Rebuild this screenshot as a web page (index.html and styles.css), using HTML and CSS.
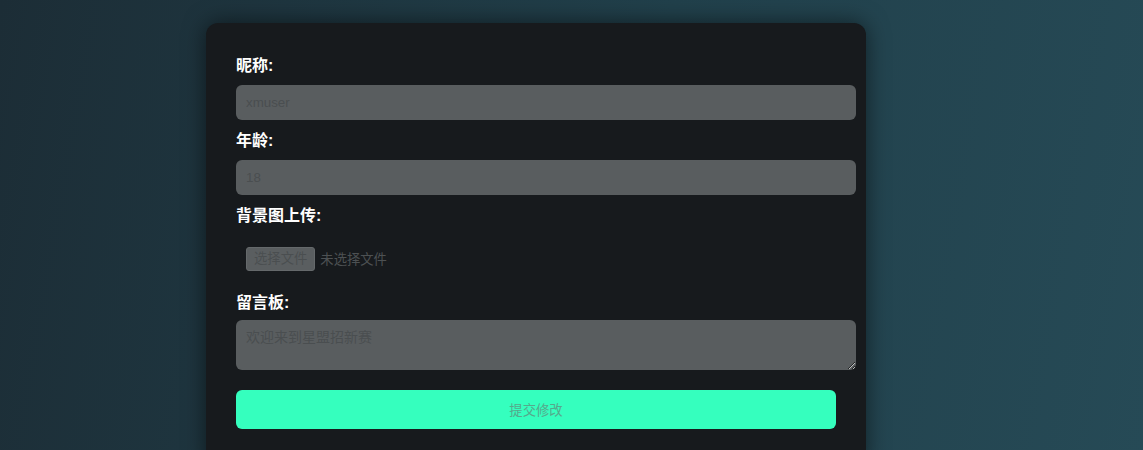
FILE: index.html
```html
<!DOCTYPE html>
<html lang="zh-CN">
<head>
    <meta charset="UTF-8">
    <meta name="viewport" content="width=device-width, initial-scale=1.0">
    <title>修改资料</title>
    <link rel="stylesheet" href="styles.css">
</head>
<body>
    <div class="container">
        <form class="profile-form">
            <!-- 昵称 -->
            <div class="form-group">
                <label for="nickname">昵称:</label>
                <input type="text" id="nickname" class="text-input" placeholder="xmuser">
            </div>

            <!-- 年龄 -->
            <div class="form-group">
                <label for="age">年龄:</label>
                <input type="text" id="age" class="text-input" placeholder="18">
            </div>

            <!-- 背景图 -->
            <div class="form-group">
                <label>背景图上传:</label>
                <div class="file-input">
                    <span class="file-btn">选择文件</span>
                    <span class="file-name">未选择文件</span>
                </div>
            </div>

            <!-- 留言板 -->
            <div class="form-group">
                <label for="message">留言板:</label>
                <textarea id="message" class="text-area" placeholder="欢迎来到星盟招新赛"></textarea>
            </div>

            <button type="button" class="submit-btn">提交修改</button>
        </form>
    </div>
</body>
</html>
```

FILE: styles.css
```css
body {
    font-family: "Liberation Sans", "Noto Sans CJK SC", sans-serif;
    background: linear-gradient(100deg, #1c2d36 0%, #21404b 55%, #264a56 100%);
    margin: 0;
    padding: 0;
    min-height: 450px;
    overflow: hidden;
}
.container {
    width: 600px;
    margin: 23px 0 0 206px;
    padding: 33px 30px 40px;
    background-color: #171a1d;
    border-radius: 12px;
    box-shadow: 0 0 22px rgba(0, 0, 0, 0.55);
}
.form-group {
    margin-bottom: 11px;
}
.form-group label {
    display: block;
    color: #fff;
    font-size: 16px;
    font-weight: bold;
    line-height: 19px;
    margin-bottom: 10px;
}
.text-input, .text-area {
    display: block;
    width: 100%;
    padding: 10px;
    border: none;
    border-radius: 6px;
    background-color: #595d5f;
    color: #4a4e50;
    font-family: "Liberation Sans", "Noto Sans CJK SC", sans-serif;
    font-size: 13.33px;
    outline: none;
}
.text-input {
    height: 15px;
}
.text-input::placeholder, .text-area::placeholder {
    color: #4a4e50;
}
.text-area {
    height: 30px;
    font-size: 14px;
    line-height: 15px;
    resize: vertical;
    margin-top: -2px;
}
.file-input {
    display: flex;
    align-items: center;
    gap: 5px;
    padding: 10px;
    height: 27px;
    font-size: 13.33px;
}
.file-btn {
    display: inline-block;
    padding: 3px 7px 4px;
    background-color: #5a5e60;
    border: 1px solid #65696b;
    border-radius: 3px;
    color: #4a4e50;
    line-height: 15px;
}
.file-name {
    color: #4d5153;
}
.submit-btn {
    display: block;
    width: 600px;
    height: 39px;
    margin-top: 20px;
    background-color: #35ffbe;
    color: #55a98c;
    border: none;
    border-radius: 6px;
    font-family: "Liberation Sans", "Noto Sans CJK SC", sans-serif;
    font-size: 13.33px;
    cursor: pointer;
}
```
